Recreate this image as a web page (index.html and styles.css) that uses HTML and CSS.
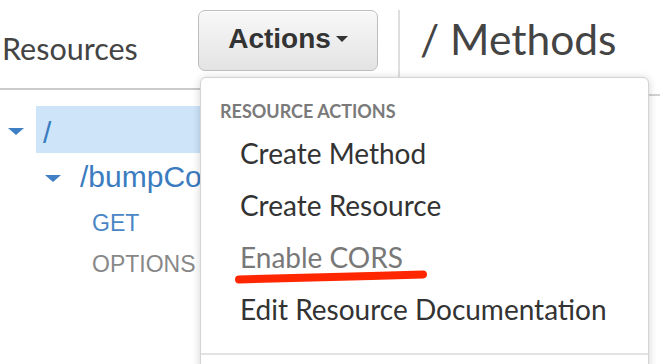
FILE: index.html
```html
<!DOCTYPE html>
<html lang="en">
<head>
  <meta charset="UTF-8">
  <title>API Gateway - Resources</title>
  <link rel="stylesheet" href="styles.css">
</head>
<body>
  <div class="console">
    <aside class="resources">
      <div class="res-head">
        <h2 class="res-title">Resources</h2>
        <div class="actions">
          <button class="actions-btn">Actions<span class="caret"></span></button>

          <div class="actions-menu">
            <div class="menu-heading">RESOURCE ACTIONS</div>
            <ul class="menu-list">
              <li>Create Method</li>
              <li>Create Resource</li>
              <li class="disabled">Enable CORS</li>
              <li>Edit Resource Documentation</li>
            </ul>
            <div class="menu-divider"></div>

            <!-- red marker scribbled under Enable CORS -->
            <svg class="scribble" width="200" height="26" viewBox="0 0 200 26">
              <path d="M9 17.5 C 60 16.5, 130 14, 193 12.5" fill="none" stroke="#ff2600" stroke-width="8" stroke-linecap="round"/>
            </svg>
          </div>
        </div>
      </div>

      <ul class="tree">
        <li>
          <div class="node selected">
            <span class="toggle"><i class="tri"></i></span>
            <span class="node-label">/</span>
          </div>
          <ul class="tree-children">
            <li>
              <div class="node">
                <span class="toggle"><i class="tri"></i></span>
                <span class="node-label">/bumpCounter</span>
              </div>
              <ul class="method-list">
                <li class="get">GET</li>
                <li class="options">OPTIONS</li>
              </ul>
            </li>
          </ul>
        </li>
      </ul>
    </aside>

    <main class="method-pane">
      <div class="pane-head">
        <h1 class="pane-title">/ Methods</h1>
      </div>
    </main>
  </div>
</body>
</html>
```

FILE: styles.css
```css
* { box-sizing: border-box; }
body {
  margin: 0;
  background: #fff;
  font-family: Lato, "Open Sans", sans-serif;
  color: #333;
}
ul {
  list-style: none;
  margin: 0;
  padding: 0;
}

.console {
  display: flex;
  width: 660px;
  height: 364px;
  overflow: hidden;
}

/* left panel */
.resources {
  width: 398px;
  flex: 0 0 398px;
}
.res-head {
  display: flex;
  align-items: flex-start;
  height: 90px;
  padding: 10px 0 0 2px;
  border-bottom: 2px solid #cacaca;
}
.res-title {
  width: 196px;
  margin: 20px 0 0;
  font-size: 30.5px;
  line-height: 36px;
  font-weight: 400;
  color: #444;
}

.actions {
  position: relative;
}
.actions-btn {
  display: flex;
  align-items: center;
  justify-content: center;
  width: 180px;
  height: 61px;
  padding: 0 0 4px;
  border: 1px solid #bdbdbd;
  border-radius: 7px;
  background: linear-gradient(#f8f8f8, #e3e3e3);
  box-shadow: inset 0 1px 0 #fff;
  font-family: "Liberation Sans", Arial, sans-serif;
  font-size: 28px;
  font-weight: 700;
  color: #333;
  cursor: pointer;
}
.caret {
  display: inline-block;
  width: 0;
  height: 0;
  margin-left: 5px;
  border-left: 6.5px solid transparent;
  border-right: 6.5px solid transparent;
  border-top: 6.5px solid #333;
}

/* dropdown */
.actions-menu {
  position: absolute;
  left: 2px;
  top: 67px;
  z-index: 10;
  width: 449px;
  height: 320px;
  padding-top: 24px;
  background: #fff;
  border: 1px solid #d4d4d4;
  border-radius: 6px 6px 0 0;
  box-shadow: 0 1px 8px rgba(0, 0, 0, 0.18);
}
.menu-heading {
  padding-left: 19px;
  font-size: 18px;
  line-height: 18px;
  font-weight: 700;
  color: #7a7a7a;
}
.menu-list {
  margin: 7px 0 18px;
}
.menu-list li {
  padding-left: 39px;
  font-size: 28px;
  line-height: 52px;
  color: #333;
  white-space: nowrap;
}
.menu-list li.disabled {
  color: #787878;
}
.menu-divider {
  border-top: 2px solid #e2e2e2;
}
.scribble {
  position: absolute;
  left: 29px;
  top: 184px;
}

/* tree */
.tree {
  padding-top: 16px;
  font-family: "Liberation Sans", Arial, sans-serif;
}
.node {
  display: flex;
}
.toggle {
  display: flex;
  align-items: center;
  flex: 0 0 36px;
  padding: 3px 0 0 8px;
}
.tri {
  width: 0;
  height: 0;
  border-left: 8.5px solid transparent;
  border-right: 8.5px solid transparent;
  border-top: 7px solid #3f7fc4;
}
.node-label {
  flex: 1;
  padding-left: 7px;
  font-size: 30px;
  line-height: 48px;
  color: #3b7cc0;
  white-space: nowrap;
  overflow: hidden;
}
.selected .node-label {
  padding-top: 6px;
  line-height: 41px;
  background: #cde4f9;
}
.tree-children {
  padding-left: 37px;
}
.method-list {
  padding: 2px 0 0 55px;
}
.method-list li {
  font-size: 23px;
  line-height: 41px;
}
.method-list .get {
  color: #4a86c6;
}
.method-list .options {
  color: #888;
}

/* right panel */
.method-pane {
  flex: 1;
}
.pane-head {
  height: 86px;
  border-bottom: 2px solid #d2d2d2;
}
.pane-title {
  height: 67px;
  margin: 10px 0 0;
  padding: 7px 0 0 20px;
  border-left: 2px solid #dedede;
  font-size: 42.5px;
  line-height: 44px;
  font-weight: 400;
  color: #444;
  white-space: nowrap;
}
```
